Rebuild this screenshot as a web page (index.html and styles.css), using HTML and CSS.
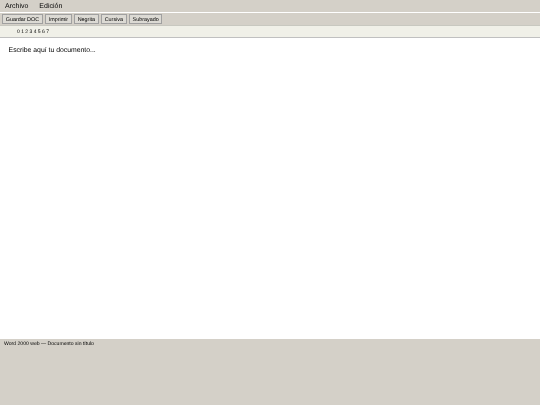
FILE: index.html
```html
<!DOCTYPE html>
<html lang="es">
<head>
<meta charset="utf-8">
<title>Word 2000 web</title>
<link rel="stylesheet" href="styles.css">
</head>
<body>
<div class="app">
  <nav class="menubar"><span>Archivo</span><span>Edición</span></nav>
  <div class="toolbar">
    <button>Guardar DOC</button><button>Imprimir</button><button>Negrita</button><button>Cursiva</button><button>Subrayado</button>
  </div>
  <div class="ruler">0 1 2 3 4 5 6 7</div>
  <main class="doc">Escribe aquí tu documento...</main>
  <footer class="status">Word 2000 web — Documento sin título</footer>
</div>
</body>
</html>
```
FILE: styles.css
```css
* { box-sizing: border-box; }
html, body { margin: 0; height: 100%; }
body { font-family: "Liberation Sans", Arial, sans-serif; background: #d4d0c8; color: #000; text-rendering: geometricPrecision; }
.app { display: flex; flex-direction: column; width: 540px; height: 405px; overflow: hidden; filter: blur(0.2px); }
.menubar { flex: none; height: 12px; display: flex; gap: 11px; padding: 1px 0 0 5px; font-size: 7px; line-height: 11px; background: #d4d0c8; }
.toolbar { flex: none; height: 14px; display: flex; gap: 2px; padding: 1px 2px 0; background: #d4d0c8; border-top: 1px solid #fff; border-bottom: 1px solid #c8c8c0; }
.toolbar button { height: 10px; padding: 1px 2.8px 0; font: 5.4px/8px "Liberation Sans", Arial, sans-serif; text-rendering: geometricPrecision; color: #000; background: #dcdad4; border: 1px solid #a0a0a0; }
.ruler { flex: none; height: 12px; padding: 1px 0 0 17px; font-size: 5px; line-height: 11px; background: #f0f0e8; border-bottom: 1px solid #c0c0c0; }
.doc { flex: none; height: 301px; padding: 8px 8.6px 0; font-size: 6.85px; line-height: 10px; background: #fff; }
.status { flex: none; height: 12px; padding-left: 4px; font-size: 5.1px; line-height: 10px; background: #d4d0c8; }
```
